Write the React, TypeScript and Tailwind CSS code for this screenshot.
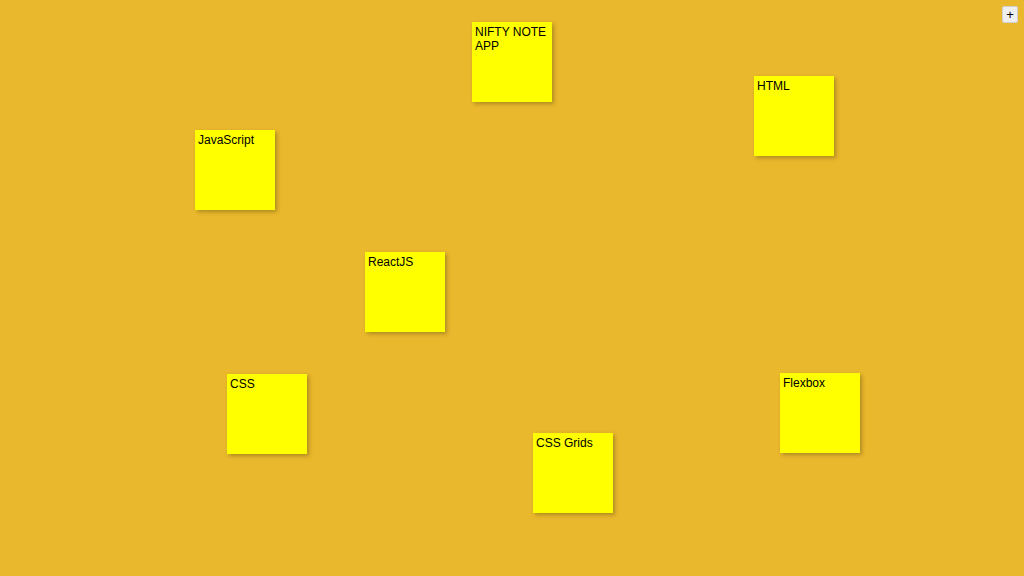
import React from "react";

type Note = { id: number; text: string; x: number; y: number };

const notes: Note[] = [
  { id: 1, text: "NIFTY NOTE APP", x: 472, y: 22 },
  { id: 2, text: "HTML", x: 754, y: 76 },
  { id: 3, text: "JavaScript", x: 195, y: 130 },
  { id: 4, text: "ReactJS", x: 365, y: 252 },
  { id: 5, text: "CSS", x: 227, y: 374 },
  { id: 6, text: "Flexbox", x: 780, y: 373 },
  { id: 7, text: "CSS Grids", x: 533, y: 433 },
];

export default function App() {
  return (
    <div className="relative w-full h-screen overflow-hidden bg-[#eab82c] font-['Liberation_Sans',Arial,sans-serif]">
      <button className="absolute top-[6px] right-[6px] w-[16px] h-[17px] flex items-center justify-center bg-[#efefef] border border-[#d0d0d0] rounded-[2px] text-[13px] leading-none text-black">
        +
      </button>
      {notes.map((n) => (
        <div
          key={n.id}
          className="absolute w-[80px] h-[80px] bg-[#ffff00] shadow-[2px_2px_4px_rgba(0,0,0,0.25)] pl-[3px] pr-[2px] pt-[3px] text-[12px] leading-[14px] text-black"
          style={{ left: n.x, top: n.y }}
        >
          {n.text}
        </div>
      ))}
    </div>
  );
}
